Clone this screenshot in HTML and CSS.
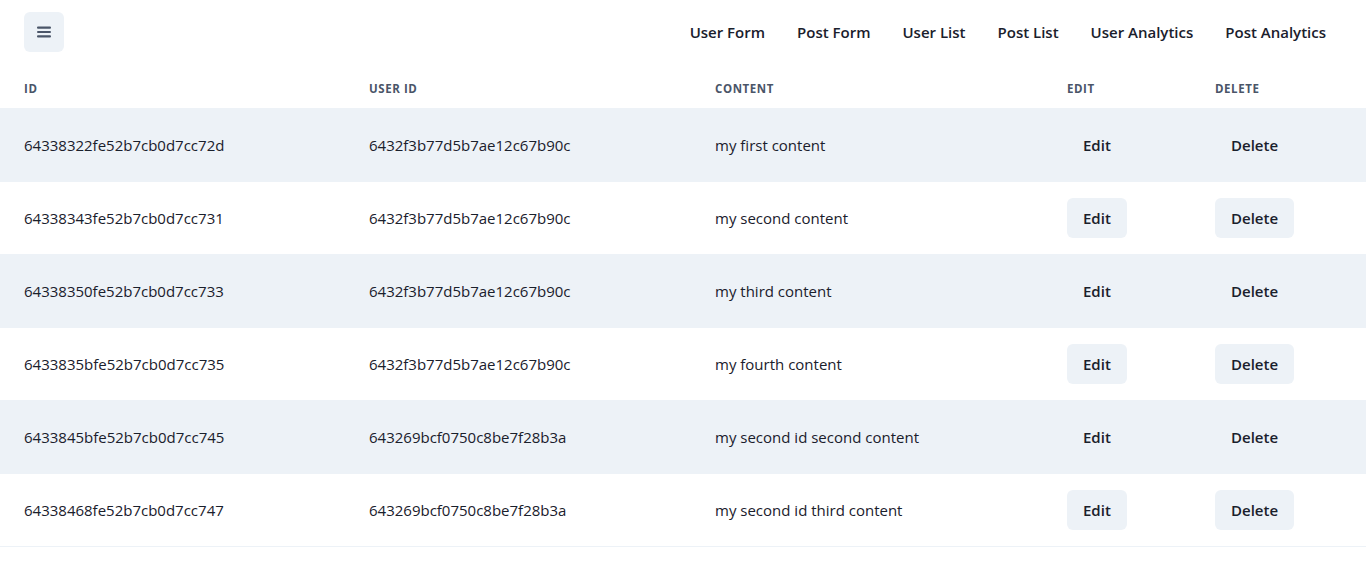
FILE: index.html
```html
<!DOCTYPE html>
<html lang="en">
<head>
<meta charset="utf-8">
<title>Post List</title>
<link rel="stylesheet" href="styles.css">
</head>
<body>
<header class="topbar">
  <button class="icon-btn" aria-label="Menu">
    <svg viewBox="0 0 14 12" width="14" height="12" aria-hidden="true"><rect x="0" y="0.5" width="14" height="2.2" rx="1" fill="currentColor"/><rect x="0" y="4.9" width="14" height="2.2" rx="1" fill="currentColor"/><rect x="0" y="9.3" width="14" height="2.2" rx="1" fill="currentColor"/></svg>
  </button>
  <nav class="nav">
    <a class="nav-link">User Form</a>
    <a class="nav-link">Post Form</a>
    <a class="nav-link">User List</a>
    <a class="nav-link">Post List</a>
    <a class="nav-link">User Analytics</a>
    <a class="nav-link">Post Analytics</a>
  </nav>
</header>
<main class="table-wrap">
  <table class="table">
    <colgroup>
      <col class="c1"><col class="c2"><col class="c3"><col class="c4"><col class="c5">
    </colgroup>
    <thead>
      <tr><th>Id</th><th>User Id</th><th>Content</th><th>Edit</th><th>Delete</th></tr>
    </thead>
    <tbody>
      <tr><td>64338322fe52b7cb0d7cc72d</td><td>6432f3b77d5b7ae12c67b90c</td><td>my first content</td><td><button class="btn">Edit</button></td><td><button class="btn">Delete</button></td></tr>
      <tr><td>64338343fe52b7cb0d7cc731</td><td>6432f3b77d5b7ae12c67b90c</td><td>my second content</td><td><button class="btn">Edit</button></td><td><button class="btn">Delete</button></td></tr>
      <tr><td>64338350fe52b7cb0d7cc733</td><td>6432f3b77d5b7ae12c67b90c</td><td>my third content</td><td><button class="btn">Edit</button></td><td><button class="btn">Delete</button></td></tr>
      <tr><td>6433835bfe52b7cb0d7cc735</td><td>6432f3b77d5b7ae12c67b90c</td><td>my fourth content</td><td><button class="btn">Edit</button></td><td><button class="btn">Delete</button></td></tr>
      <tr><td>6433845bfe52b7cb0d7cc745</td><td>643269bcf0750c8be7f28b3a</td><td>my second id second content</td><td><button class="btn">Edit</button></td><td><button class="btn">Delete</button></td></tr>
      <tr><td>64338468fe52b7cb0d7cc747</td><td>643269bcf0750c8be7f28b3a</td><td>my second id third content</td><td><button class="btn">Edit</button></td><td><button class="btn">Delete</button></td></tr>
    </tbody>
  </table>
</main>
</body>
</html>
```

FILE: styles.css
```css
* { box-sizing: border-box; }
html, body { margin: 0; padding: 0; }
body {
  font-family: "Open Sans", "Noto Sans", "Liberation Sans", sans-serif;
  color: #1A202C;
  background: #ffffff;
  font-size: 15px;
  line-height: 1.5;
}
.topbar {
  height: 64px;
  padding: 12px 24px;
  display: flex;
  align-items: center;
  justify-content: space-between;
}
.icon-btn {
  width: 40px;
  height: 40px;
  border: 0;
  border-radius: 6px;
  background: #EDF2F7;
  color: #4A5568;
  display: flex;
  align-items: center;
  justify-content: center;
  padding: 0;
}
.nav { display: flex; }
.nav-link {
  padding: 0 16px;
  height: 40px;
  display: flex;
  align-items: center;
  font-weight: 600;
  font-size: 15px;
  color: #1A202C;
}
.table-wrap { padding-top: 4px; }
.table {
  width: 100%;
  border-collapse: collapse;
  table-layout: fixed;
}
.c1 { width: 345px; }
.c2 { width: 346px; }
.c3 { width: 352px; }
.c4 { width: 148px; }
.c5 { width: 175px; }
th {
  text-align: left;
  padding: 13px 24px 11px;
  font-size: 11.5px;
  line-height: 16px;
  font-weight: 700;
  text-transform: uppercase;
  letter-spacing: 0.05em;
  color: #4A5568;
  border-bottom: 1px solid #EDF2F7;
}
td {
  padding: 16px 24px;
  line-height: 20px;
  font-size: 15px;
  border-bottom: 1px solid #EDF2F7;
  height: 73px;
}
tbody tr:nth-child(odd) td { background: #EDF2F7; }
.btn {
  font-family: inherit;
  height: 40px;
  padding: 0 16px;
  border: 0;
  border-radius: 6px;
  background: #EDF2F7;
  color: #1A202C;
  font-size: 15px;
  font-weight: 600;
}
```
